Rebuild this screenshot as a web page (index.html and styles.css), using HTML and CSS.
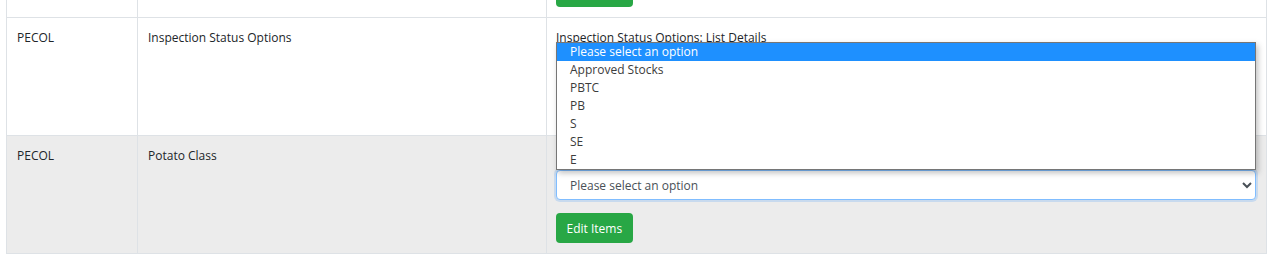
FILE: index.html
```html
<!DOCTYPE html>
<html lang="en">
<head>
  <meta charset="UTF-8">
  <meta name="viewport" content="width=device-width, initial-scale=1.0">
  <title>Lists</title>
  <link rel="stylesheet" href="styles.css">
</head>
<body>

  <div class="list-page">
    <table class="list-table">
      <tr>
        <td class="col-org">PECOL</td>
        <td class="col-name">Seed Lot Status</td>
        <td class="col-items">
          <label class="list-label">Seed Lot Status: List Details</label>
          <select class="list-select">
            <option>Please select an option</option>
          </select>
          <button class="btn-edit">Edit Items</button>
        </td>
      </tr>
      <tr>
        <td class="col-org">PECOL</td>
        <td class="col-name">Inspection Status Options</td>
        <td class="col-items">
          <label class="list-label">Inspection Status Options: List Details</label>
          <select class="list-select">
            <option>Please select an option</option>
          </select>
          <button class="btn-edit">Edit Items</button>
        </td>
      </tr>
      <tr class="row-striped">
        <td class="col-org">PECOL</td>
        <td class="col-name">Potato Class</td>
        <td class="col-items">
          <label class="list-label">Potato Class: List Details</label>
          <div class="select-wrap">
            <select class="list-select focused">
              <option>Please select an option</option>
            </select>
            <!-- open dropdown of the select -->
            <ul class="select-popup">
              <li class="active">Please select an option</li>
              <li>Approved Stocks</li>
              <li>PBTC</li>
              <li>PB</li>
              <li>S</li>
              <li>SE</li>
              <li>E</li>
            </ul>
          </div>
          <button class="btn-edit">Edit Items</button>
        </td>
      </tr>
    </table>
  </div>

</body>
</html>
```

FILE: styles.css
```css
body {
  font-family: "Open Sans", "Noto Sans", Arial, sans-serif;
  font-size: 12px;
  color: #212529;
  background-color: #fff;
  margin: 0;
  padding: 0;
}

.list-page {
  padding-left: 6px;
  margin-top: -101px;
}

.list-table {
  width: 1261px;
  border-collapse: collapse;
  table-layout: fixed;
}

.list-table td {
  border: 1px solid #dee2e6;
  padding: 11px 10px 10px 10px;
  vertical-align: top;
  line-height: 18px;
}

.list-table td.col-items {
  padding-left: 9px;
}

.col-org {
  width: 110px;
}

.col-name {
  width: 388px;
}

.row-striped {
  background-color: #ececec;
}

.list-label {
  display: block;
  margin-bottom: 5px;
}

.select-wrap {
  position: relative;
}

.list-select {
  display: block;
  width: 100%;
  height: 30px;
  padding: 0 9px;
  font-family: inherit;
  font-size: 12px;
  color: #495057;
  background: #fff;
  border: 1px solid #ced4da;
  border-radius: 4px;
}

.list-select.focused {
  border-color: #80bdff;
  box-shadow: 0 0 0 2px rgba(0, 123, 255, 0.15);
  outline: none;
}

.select-popup {
  position: absolute;
  left: 0;
  right: 0;
  bottom: 100%;
  margin: 0;
  padding: 0;
  list-style: none;
  background: #fff;
  border: 1px solid #767676;
  box-shadow: 2px 3px 6px rgba(0, 0, 0, 0.25);
  z-index: 10;
}

.select-popup li {
  height: 18px;
  line-height: 18px;
  padding-left: 13px;
  color: #3c3c3c;
}

.select-popup li.active {
  background-color: #1e90ff;
  color: #fff;
}

.btn-edit {
  display: block;
  margin-top: 13px;
  height: 30px;
  padding: 0 10.5px;
  font-family: inherit;
  font-size: 12px;
  color: #fff;
  background-color: #28a745;
  border: none;
  border-radius: 4px;
  cursor: pointer;
}
```
